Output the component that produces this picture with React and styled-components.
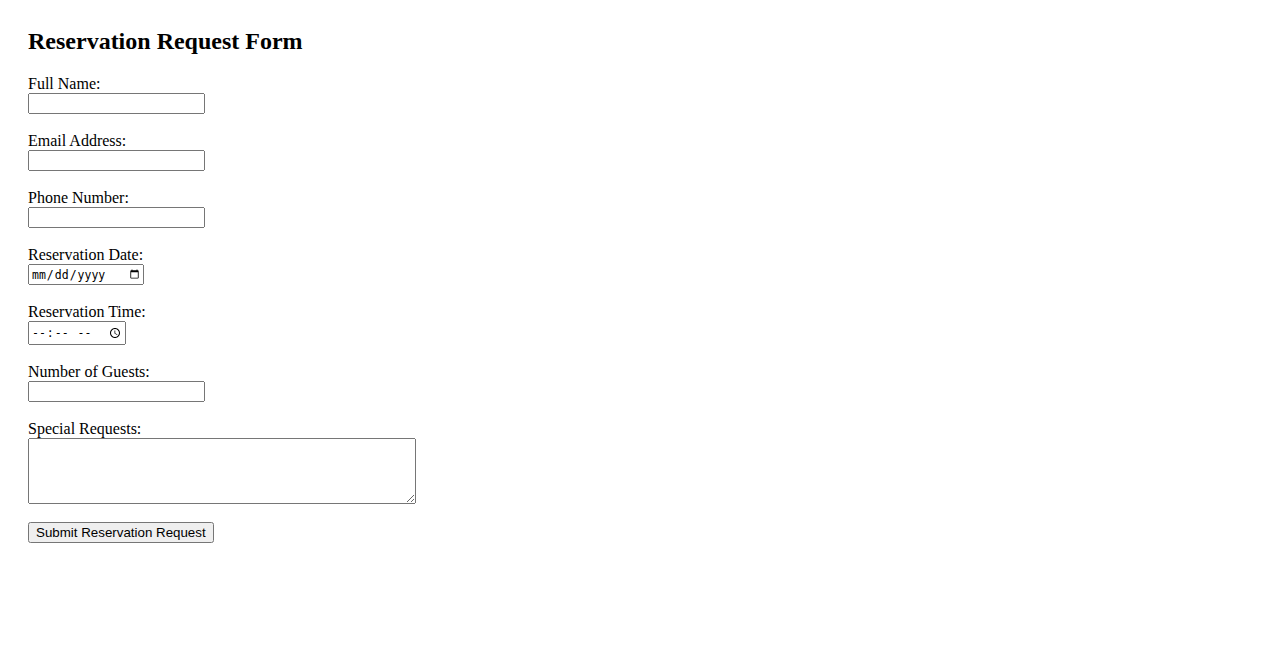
import styled, { createGlobalStyle } from 'styled-components';

const GlobalStyle = createGlobalStyle`
  body {
    margin: 0;
    font-family: 'Liberation Serif', 'Times New Roman', serif;
    font-size: 16px;
    color: #000;
    background: #fff;
  }
`;

const Page = styled.div`
  padding: 28px;
`;

const Title = styled.h2`
  margin: 0 0 20px;
  font-size: 24px;
  font-weight: bold;
`;

const Form = styled.form`
  display: flex;
  flex-direction: column;
  align-items: flex-start;
`;

const Field = styled.div`
  display: flex;
  flex-direction: column;
  align-items: flex-start;
  margin-bottom: 18px;
`;

const Label = styled.label`
  line-height: 18px;
`;

const widths = { date: 116, time: 98 };
const heights = { time: 24 };

const Input = styled.input`
  margin: 0;
  box-sizing: border-box;
  width: ${(p) => widths[p.type] || 177}px;
  height: ${(p) => heights[p.type] || 21}px;
  ${(p) =>
    widths[p.type] &&
    `
    font-family: 'DejaVu Sans Mono', 'Liberation Mono', monospace;
    font-size: 11.5px;
  `}
`;

const TextArea = styled.textarea`
  margin: 0;
  width: 388px;
  height: 66px;
  box-sizing: border-box;
`;

const SubmitButton = styled.button`
  margin: 0;
  font-family: 'Liberation Sans', Arial, sans-serif;
  font-size: 13.33px;
`;

const fields = [
  { id: 'name', label: 'Full Name:', type: 'text' },
  { id: 'email', label: 'Email Address:', type: 'email' },
  { id: 'phone', label: 'Phone Number:', type: 'tel' },
  { id: 'date', label: 'Reservation Date:', type: 'date' },
  { id: 'time', label: 'Reservation Time:', type: 'time' },
  { id: 'guests', label: 'Number of Guests:', type: 'number' },
];

const App = () => {
  return (
    <Page>
      <GlobalStyle />
      <Title>Reservation Request Form</Title>
      <Form onSubmit={(e) => e.preventDefault()}>
        {fields.map((f) => (
          <Field key={f.id}>
            <Label htmlFor={f.id}>{f.label}</Label>
            <Input id={f.id} name={f.id} type={f.type} />
          </Field>
        ))}
        <Field>
          <Label htmlFor='requests'>Special Requests:</Label>
          <TextArea id='requests' name='requests' />
        </Field>
        <SubmitButton type='submit'>Submit Reservation Request</SubmitButton>
      </Form>
    </Page>
  );
};

export default App;
